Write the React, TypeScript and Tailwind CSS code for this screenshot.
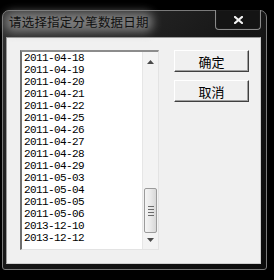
import React from "react";

const dates = [
  "2011-04-18",
  "2011-04-19",
  "2011-04-20",
  "2011-04-21",
  "2011-04-22",
  "2011-04-25",
  "2011-04-26",
  "2011-04-27",
  "2011-04-28",
  "2011-04-29",
  "2011-05-03",
  "2011-05-04",
  "2011-05-05",
  "2011-05-06",
  "2013-12-10",
  "2013-12-12",
];

function Arrow({ up }: { up?: boolean }) {
  return (
    <svg width="7" height="4" viewBox="0 0 7 4">
      {up ? (
        <polygon points="3.5,0 7,4 0,4" fill="#4a4a4a" />
      ) : (
        <polygon points="0,0 7,0 3.5,4" fill="#4a4a4a" />
      )}
    </svg>
  );
}

function WinButton({ label }: { label: string }) {
  return (
    <button className="w-[75px] h-[22px] bg-[#f0f0f0] border border-t-white border-l-white border-r-[#404040] border-b-[#404040] shadow-[inset_-1px_-1px_0_#a0a0a0] text-[13px] leading-none text-black [font-family:'Noto_Sans_CJK_SC',sans-serif]">
      {label}
    </button>
  );
}

export default function App() {
  return (
    <div className="w-[274px] h-[280px] bg-black pt-[10px] pl-[2px]">
      <div className="w-[265px] h-[260px] rounded-t-[7px] rounded-b-[3px] border border-[#7a7a7a] bg-gradient-to-br from-[#333] via-[#161616] to-[#0c0c0c] flex flex-col pl-[3px] pr-[5px] pb-[5px]">
        {/* title bar */}
        <div className="h-[26px] flex items-start justify-between shrink-0">
          <div className="relative ml-[3px] mt-[2px]">
            {/* aero glow behind the caption */}
            <div className="absolute -inset-x-[4px] -inset-y-[1px] rounded-[8px] bg-[#8e8e8e] blur-[5px] opacity-80" />
            <div className="relative text-[12.5px] leading-[18px] tracking-[0.2px] text-[#111] [font-family:'Noto_Sans_CJK_SC',sans-serif]">
              请选择指定分笔数据日期
            </div>
          </div>
          <div className="-mt-[1px] w-[46px] h-[20px] rounded-b-[4px] border border-t-0 border-[#8a8a8a] shadow-[inset_0_0_0_1px_#1a1a1a] bg-[#141414] flex items-center justify-center">
            <svg width="9" height="8" viewBox="0 0 9 8">
              <path d="M1 1 L8 7 M8 1 L1 7" stroke="#f2f2f2" strokeWidth="2.2" strokeLinecap="square" />
            </svg>
          </div>
        </div>

        {/* client area */}
        <div className="flex-1 bg-[#f0f0f0] border border-[#9a9a9a] border-r-[#cfcfcf] border-b-[#cfcfcf] flex items-start pt-[12px] pl-[13px] gap-[15px]">
          <div className="w-[139px] h-[200px] flex border-t-2 border-l-2 border-t-[#8c8c8c] border-l-[#6e6e6e] border-r border-b border-r-[#e3e3e3] border-b-[#e3e3e3] bg-white">
            <div className="flex-1 pl-[2px] text-[11px] leading-[12px] tracking-[-0.6px] text-black [font-family:'Liberation_Mono',monospace]">
              {dates.map((d) => (
                <div key={d} className="h-[12px]">
                  {d}
                </div>
              ))}
            </div>
            <div className="w-[16px] h-full bg-[#f3f3f3] border-l border-[#e6e6e6] flex flex-col items-center">
              <div className="h-[16px] flex items-center justify-center pt-[4px]">
                <Arrow up />
              </div>
              <div className="flex-1 w-full flex flex-col justify-end pb-[2px]">
                <div className="mx-[1px] h-[45px] rounded-[2px] border border-[#9b9b9b] bg-gradient-to-r from-[#f4f4f4] via-[#e9e9e9] to-[#d8d8d8] flex flex-col items-center justify-center gap-[2px]">
                  <div className="w-[6px] h-px bg-[#6b6b6b]" />
                  <div className="w-[6px] h-px bg-[#6b6b6b]" />
                  <div className="w-[6px] h-px bg-[#6b6b6b]" />
                  <div className="w-[6px] h-px bg-[#6b6b6b]" />
                </div>
              </div>
              <div className="h-[14px] flex items-start justify-center pt-[3px]">
                <Arrow />
              </div>
            </div>
          </div>

          <div className="flex flex-col gap-[8px]">
            <WinButton label="确定" />
            <WinButton label="取消" />
          </div>
        </div>
      </div>
    </div>
  );
}
